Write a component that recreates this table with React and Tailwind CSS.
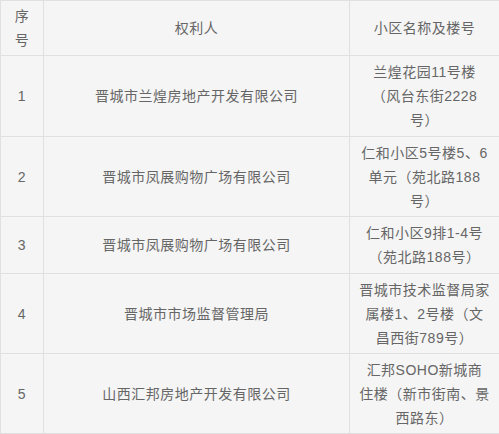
import React from "react";

const rows = [
  { no: "1", h: "h-[81px]", owner: "晋城市兰煌房地产开发有限公司", addr: ["兰煌花园11号楼", "（风台东街2228", "号）"] },
  { no: "2", h: "h-[80px]", owner: "晋城市凤展购物广场有限公司", addr: ["仁和小区5号楼5、6", "单元（苑北路188", "号）"] },
  { no: "3", h: "h-[57px]", owner: "晋城市凤展购物广场有限公司", addr: ["仁和小区9排1-4号", "（苑北路188号）"] },
  { no: "4", h: "h-[80px]", owner: "晋城市市场监督管理局", addr: ["晋城市技术监督局家", "属楼1、2号楼（文", "昌西街789号）"] },
  { no: "5", h: "h-[80px]", owner: "山西汇邦房地产开发有限公司", addr: ["汇邦SOHO新城商", "住楼（新市街南、景", "西路东）"] },
];

export default function App() {
  const cell = "border border-[#e0e0e0] px-2 py-[2px] text-center align-middle";
  return (
    <div className="w-[499px] h-[434px] bg-[#f5f5f5] overflow-hidden">
      <table className="w-[499px] border-collapse table-fixed text-[14px] leading-6 tracking-[0.5px] text-[#666666] font-['Liberation_Sans','Noto_Sans_CJK_SC',sans-serif]">
        <colgroup>
          <col className="w-[43px]" />
          <col className="w-[306px]" />
          <col className="w-[150px]" />
        </colgroup>
        <thead>
          <tr className="h-[55px]">
            <th className={`${cell} font-normal`}>
              序<br />号
            </th>
            <th className={`${cell} font-normal`}>权利人</th>
            <th className={`${cell} font-normal`}>小区名称及楼号</th>
          </tr>
        </thead>
        <tbody>
          {rows.map((r) => (
            <tr key={r.no} className={r.h}>
              <td className={cell}>{r.no}</td>
              <td className={cell}>{r.owner}</td>
              <td className={cell}>
                {r.addr.map((line, i) => (
                  <div key={i} className="whitespace-nowrap">{line}</div>
                ))}
              </td>
            </tr>
          ))}
        </tbody>
      </table>
    </div>
  );
}
